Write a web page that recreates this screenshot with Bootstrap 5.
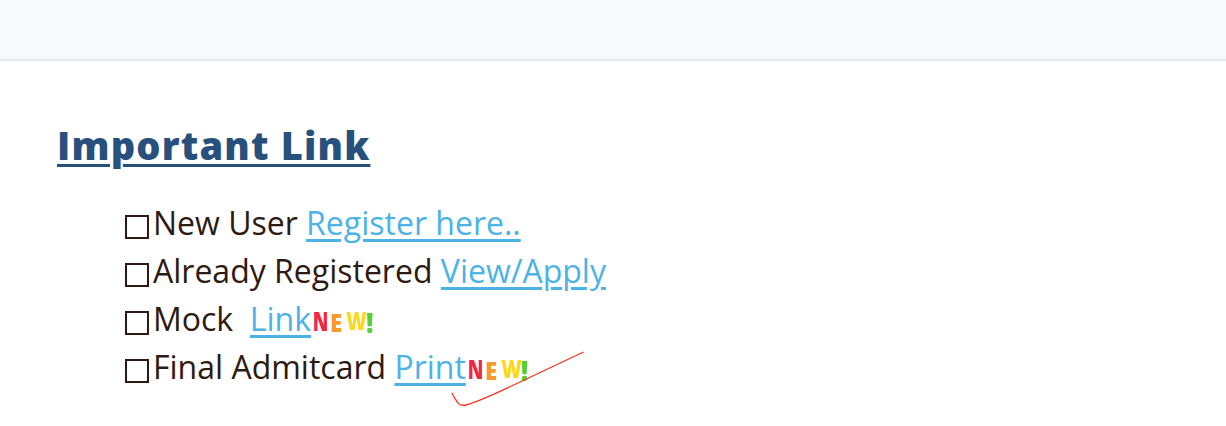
<!DOCTYPE html>
<html lang="en">
<head>
<meta charset="utf-8">
<title>Important Link</title>
<link href="https://cdn.jsdelivr.net/npm/bootstrap@5.3.0/dist/css/bootstrap.min.css" rel="stylesheet">
<style>
body { background:#fff; font-family:"Open Sans",sans-serif; overflow:hidden; }
.top-strip { height:61px; background:#f8f9fc; border-bottom:2px solid #e6e8ec; }
.page-body { padding:59px 0 0 57px; }
.head-link { font-family:"Open Sans",sans-serif; font-weight:800; font-size:38px; letter-spacing:1.2px; line-height:50px; color:#28507c; text-decoration:underline; text-decoration-thickness:3px; text-underline-offset:4px; margin:0; }
.link-rows { margin:29px 0 0 68px; padding:0; list-style:none; }
.link-rows li { height:48px; line-height:48px; font-size:32px; color:#2d1a10; display:flex; align-items:center; white-space:pre; position:relative; }
.tick-box { width:24px; height:24px; border:2px solid #2d1a10; margin:7px 4px 0 0; flex:none; }
.link-rows a { color:#4cb3e6; text-decoration:underline; text-decoration-thickness:3px; text-underline-offset:4px; }
.new-tag { font-family:"Open Sans",sans-serif; font-weight:800; font-size:26px; display:inline-flex; margin:4px 0 0 0; filter:blur(.6px); line-height:1; }
.new-tag span { display:block; text-align:center; }
.c-n { color:#f5263f; width:13px; margin-right:5px; transform:scale(.72,1); }
.c-e { color:#fb9a2c; width:13px; margin-right:2px; transform:translateY(2px) scale(.85,.92); }
.c-w { color:#fbd91f; width:18px; margin-right:4px; transform:scale(.76,.92); }
.c-x { color:#57cf3a; width:7px; transform:translateY(1px) scale(1,1.1); }
.ink-mark { position:absolute; left:0; top:0; pointer-events:none; }
</style>
</head>
<body>
<div class="top-strip"></div>
<div class="page-body">
  <h2 class="head-link">Important Link</h2>
  <ul class="link-rows">
    <li><span class="tick-box"></span>New User <a href="#">Register here..</a></li>
    <li><span class="tick-box"></span>Already Registered <a href="#">View/Apply</a></li>
    <li><span class="tick-box"></span>Mock  <a href="#">Link</a><span class="new-tag"><span class="c-n">N</span><span class="c-e">E</span><span class="c-w">W</span><span class="c-x">!</span></span></li>
    <li><span class="tick-box"></span>Final Admitcard <a href="#">Print</a><span class="new-tag"><span class="c-n">N</span><span class="c-e">E</span><span class="c-w">W</span><span class="c-x">!</span></span></li>
  </ul>
</div>
<svg class="ink-mark" width="1226" height="426" viewBox="0 0 1226 426"><path d="M451.7 392.7 Q455 399 458 403 Q460 406 466 405 Q478 402 520 382 L583.5 352" fill="none" stroke="#f4371c" stroke-width="1.3"/></svg>
</body>
</html>
